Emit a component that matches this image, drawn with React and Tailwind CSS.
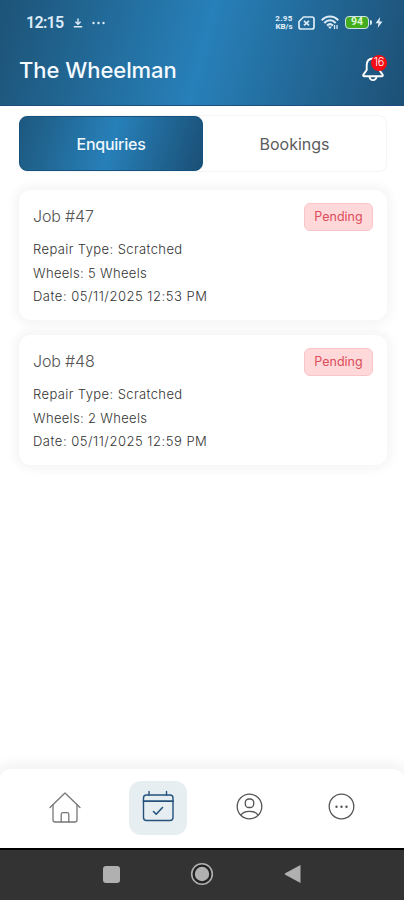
import React from "react";

const jobs = [
  { id: 47, status: "Pending", repair: "Scratched", wheels: "5 Wheels", date: "05/11/2025 12:53 PM" },
  { id: 48, status: "Pending", repair: "Scratched", wheels: "2 Wheels", date: "05/11/2025 12:59 PM" },
];

function StatusBar() {
  return (
    <div className="flex h-[45px] items-center pl-[26px] pr-[21px] text-[#dcebf7]">
      <span className="w-[38px] whitespace-nowrap font-['Roboto'] text-[16px] font-semibold leading-none tracking-[-0.7px]">12:15</span>
      <svg className="ml-[9px]" width="10" height="10" viewBox="0 0 10 10" fill="none" stroke="currentColor" strokeWidth="1.4">
        <path d="M5 0.5v5.5M2.4 3.8L5 6.3l2.600-2.500M0.800 8.700h8.400" />
      </svg>
      <svg className="ml-[9px]" width="14" height="4" viewBox="0 0 14 4" fill="currentColor">
        <circle cx="1.500" cy="2" r="1.200" />
        <circle cx="6.500" cy="2" r="1.200" />
        <circle cx="11.500" cy="2" r="1.200" />
      </svg>
      <div className="ml-auto flex items-center">
        <div className="w-[18px] whitespace-nowrap text-center font-['Roboto'] text-[8px] font-extrabold leading-[8px]">
          <div className="tracking-[0.3px]">2.95</div>
          <div className="tracking-[-0.1px]">KB/s</div>
        </div>
        <svg className="ml-[5px]" width="17" height="14" viewBox="0 0 17 14" fill="none" stroke="currentColor" strokeWidth="1.700" strokeLinejoin="round">
          <path d="M5.500 1H14a2 2 0 0 1 2 2v8a2 2 0 0 1-2 2H3a2 2 0 0 1-2-2V5.500z" />
          <path d="M6 4.800l5 4.600M11 4.800L6 9.400" />
        </svg>
        <svg className="ml-[6px]" width="18" height="15" viewBox="0 0 18 15" fill="none" stroke="currentColor" strokeWidth="2">
          <path d="M0.700 5.200C5.500 0.200 12.500 0.200 17.300 5.200" />
          <path d="M3.300 8C6.800 4.400 11.200 4.400 14.700 8" />
          <path d="M6 10.500c1.800-1.600 4.200-1.600 6 0" />
          <path d="M7 11.600h4L9 14z" fill="currentColor" stroke="none" />
          <path d="M13.500 10v4M16 10v4" strokeWidth="1.300" />
        </svg>
        <div className="ml-[6px] flex h-[13px] w-[24px] items-center justify-center rounded-[4px] border-[1.5px] border-[#cfe4ea] bg-[#43ad1f] font-['Roboto'] text-[10.5px] font-bold leading-none text-[#dff8d6]">
          94
        </div>
        <div className="ml-px h-[5px] w-[2px] rounded-r bg-[#d5e9ee]" />
        <svg className="ml-[3px]" width="8" height="11" viewBox="0 0 8 11" fill="currentColor">
          <path d="M5.200 0L0.500 6.200h3L2.700 11 7.500 4.600h-3z" />
        </svg>
      </div>
    </div>
  );
}

function Header() {
  return (
    <header className="h-[106px] border-b border-[#1c4f7e] bg-[linear-gradient(104.600deg,#1d5377_0%,#2780b9_50%,#1d5075_100%)]">
      <StatusBar />
      <div className="flex h-[50px] items-center justify-between pl-[19px] pr-[17px]">
        <h1 className="text-[22px] font-medium leading-none tracking-[-0.05px] text-[#f4faff]">The Wheelman</h1>
        <div className="relative -mt-[3px] h-[26px] w-[25px]">
          <svg width="22" height="26" viewBox="0 0 22 26" fill="none" stroke="white" strokeWidth="1.900" strokeLinejoin="round">
            <path d="M11 2.500c-4.300 0-6.300 3-6.300 7v4.500L1.400 18.600c-.5.900-.1 1.600.9 1.600h17.400c1 0 1.400-.7.900-1.600L17.300 14V9.500c0-4-2-7-6.300-7z" />
            <path d="M7.500 20.600a3.500 3.500 0 0 0 7 0" />
          </svg>
          <span className="absolute -top-px right-0 flex h-[16px] w-[16px] items-center justify-center rounded-full bg-[#f20d12] text-[11px] font-light leading-none tracking-[-0.3px] text-white">
            16
          </span>
        </div>
      </div>
    </header>
  );
}

function Tabs() {
  return (
    <div className="ml-[19px] mr-[17px] mt-[9px] flex h-[57px] items-center rounded-[8px] border border-l-0 border-[#f5f5f5] text-[16px]">
      <div className="flex h-[55px] w-[184px] items-center justify-center rounded-[8px] border border-[#15527f] bg-[linear-gradient(106deg,#1d587e_0%,#2780b9_50%,#1a4f75_100%)] font-medium tracking-[-0.25px] text-[#eef7fd]">
        Enquiries
      </div>
      <div className="flex flex-1 items-center justify-center text-[#5c5c5c]">Bookings</div>
    </div>
  );
}

function JobCard({ job }) {
  return (
    <div className="h-[130px] rounded-[12px] bg-white px-[14px] pt-[13px] shadow-[0_0_10px_5px_rgba(0,0,0,0.04)]">
      <div className="flex h-[28px] items-center justify-between">
        <h2 className="-mt-[2px] text-[16px] font-light tracking-[-0.15px] text-[#555]">Job #{job.id}</h2>
        <span className="flex h-[28px] w-[69px] items-center justify-center rounded-[6px] border border-[#f9c5c8] bg-[#ffd8da] text-[12.5px] text-[#dd4c59]">
          {job.status}
        </span>
      </div>
      <div className="mt-[7px] text-[13px] font-light leading-[23.500px] tracking-[0.4px] text-[#333]">
        <p>Repair Type: {job.repair}</p>
        <p className="tracking-[0.33px]">Wheels: {job.wheels}</p>
        <p className="tracking-[0.52px]">Date: {job.date}</p>
      </div>
    </div>
  );
}

function BottomNav() {
  return (
    <nav className="flex h-[79px] items-center justify-between rounded-t-[10px] bg-white pb-[2px] pl-[36px] pr-[34px] shadow-[0_-3px_12px_3px_rgba(0,0,0,0.05)]">
      <div className="flex h-[54px] w-[58px] items-center justify-center">
        <svg width="32" height="32" viewBox="0 0 32 32" fill="none" stroke="#777" strokeWidth="1.300" strokeLinejoin="round" strokeLinecap="round">
          <path d="M1 15.500L16 1l15 14.500" />
          <path d="M4 12.700V28a2 2 0 0 0 2 2h20a2 2 0 0 0 2-2V12.700" />
          <path d="M12.200 30v-7.500a1.800 1.800 0 0 1 1.800-1.800h4a1.800 1.800 0 0 1 1.800 1.800V30" />
        </svg>
      </div>
      <div className="-mr-px ml-px flex h-[54px] w-[58px] items-center justify-center rounded-[12px] bg-[#e7eef2]">
        <svg className="-ml-px -mt-[3px]" width="32" height="32" viewBox="0 0 32 32" fill="none" stroke="#24527c" strokeWidth="1.400" strokeLinejoin="round" strokeLinecap="round">
          <rect x="1.500" y="5" width="29.500" height="25.500" rx="3" />
          <path d="M1.500 11.200h29.500" strokeWidth="1.800" />
          <path d="M7 1.500V5M24.500 1.500V5" />
          <path d="M11.500 21.500l2.700 2.700 6.300-6.700" strokeWidth="1.600" />
        </svg>
      </div>
      <div className="flex h-[54px] w-[58px] items-center justify-center">
        <svg className="-mt-[3px]" width="27" height="27" viewBox="0 0 27 27" fill="none" stroke="#555" strokeWidth="1.300">
          <circle cx="13.500" cy="13.500" r="12.300" />
          <rect x="9.300" y="6" width="8.400" height="8.500" rx="3.600" />
          <path d="M5 22.300c1.200-2.700 4.500-4 8.500-4s7.300 1.300 8.500 4" />
        </svg>
      </div>
      <div className="flex h-[54px] w-[58px] items-center justify-center">
        <svg className="-mt-[3px]" width="27" height="27" viewBox="0 0 27 27" fill="none" stroke="#555" strokeWidth="1.300">
          <circle cx="13.500" cy="13.500" r="12.300" />
          <g fill="#555" stroke="none">
            <circle cx="8.500" cy="13.700" r="1.200" />
            <circle cx="13.500" cy="13.700" r="1.200" />
            <circle cx="18.500" cy="13.700" r="1.200" />
          </g>
        </svg>
      </div>
    </nav>
  );
}

function SystemNav() {
  return (
    <div className="flex h-[52px] items-center justify-between border-t-2 border-black bg-[#333] pb-[2px] pl-[103px] pr-[103px]">
      <div className="h-[17px] w-[17px] rounded-[3px] bg-[#b0b0b0]" />
      <svg width="24" height="24" viewBox="0 0 24 24">
        <circle cx="12" cy="12" r="10.300" fill="#222" stroke="#b0b0b0" strokeWidth="1.600" />
        <circle cx="12" cy="12" r="7.200" fill="#b0b0b0" />
      </svg>
      <svg width="17" height="20" viewBox="0 0 17 20" fill="#b0b0b0">
        <path d="M16.500 1v18L1.200 10.800a1 1 0 0 1 0-1.600z" />
      </svg>
    </div>
  );
}

export default function App() {
  return (
    <div className="flex h-[900px] w-[404px] flex-col overflow-hidden bg-white font-['Inter',sans-serif]">
      <Header />
      <Tabs />
      <main className="ml-[19px] mr-[17px] mt-[18px] flex flex-1 flex-col gap-[15px]">
        {jobs.map((job) => (
          <JobCard key={job.id} job={job} />
        ))}
      </main>
      <BottomNav />
      <SystemNav />
    </div>
  );
}
